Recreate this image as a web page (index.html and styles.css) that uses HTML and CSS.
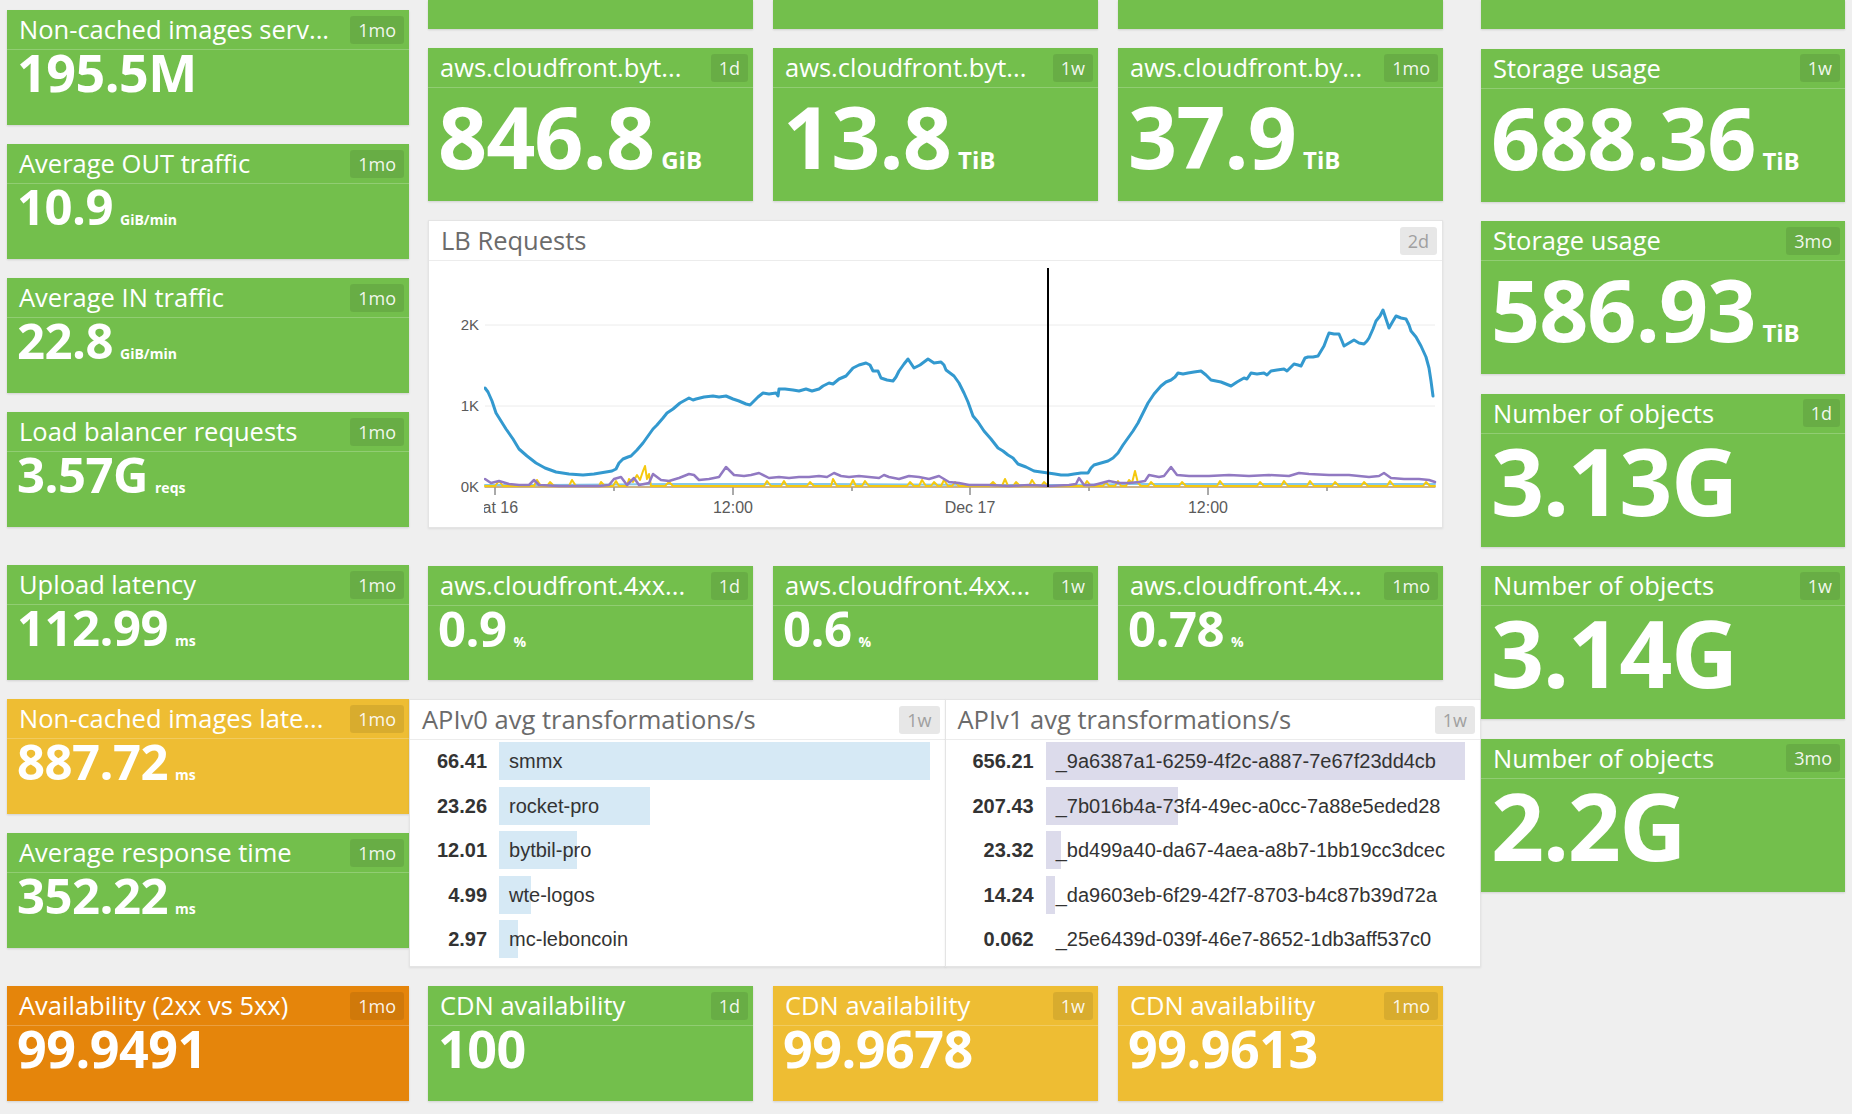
FILE: index.html
```html
<!DOCTYPE html>
<html lang="en">
<head>
<meta charset="utf-8">
<title>Dashboard</title>
<link rel="stylesheet" href="styles.css">
</head>
<body>
<div class="board">
  <div class="col col-left">
    <div class="tile green"><div class="hd"><span class="ttl">Non-cached images serv...</span><span class="badge">1mo</span></div><div class="val vm">195.5M</div></div>
    <div class="tile green"><div class="hd"><span class="ttl">Average OUT traffic</span><span class="badge">1mo</span></div><div class="val vs">10.9<span class="u">GiB/min</span></div></div>
    <div class="tile green"><div class="hd"><span class="ttl">Average IN traffic</span><span class="badge">1mo</span></div><div class="val vs">22.8<span class="u">GiB/min</span></div></div>
    <div class="tile green"><div class="hd"><span class="ttl">Load balancer requests</span><span class="badge">1mo</span></div><div class="val vs">3.57G<span class="u">reqs</span></div></div>
    <div class="tile green sep"><div class="hd"><span class="ttl">Upload latency</span><span class="badge">1mo</span></div><div class="val vs">112.99<span class="u">ms</span></div></div>
    <div class="tile yellow"><div class="hd"><span class="ttl">Non-cached images late...</span><span class="badge">1mo</span></div><div class="val vs">887.72<span class="u">ms</span></div></div>
    <div class="tile green"><div class="hd"><span class="ttl">Average response time</span><span class="badge">1mo</span></div><div class="val vs">352.22<span class="u">ms</span></div></div>
    <div class="tile orange sep"><div class="hd"><span class="ttl">Availability (2xx vs 5xx)</span><span class="badge">1mo</span></div><div class="val vm">99.9491</div></div>
  </div>

  <div class="col col-mid">
    <div class="row row-stub">
      <div class="tile green"></div>
      <div class="tile green"></div>
      <div class="tile green"></div>
    </div>
    <div class="row row-big">
      <div class="tile green"><div class="hd"><span class="ttl">aws.cloudfront.byt...</span><span class="badge">1d</span></div><div class="val vl">846.8<span class="u">GiB</span></div></div>
      <div class="tile green"><div class="hd"><span class="ttl">aws.cloudfront.byt...</span><span class="badge">1w</span></div><div class="val vl">13.8<span class="u">TiB</span></div></div>
      <div class="tile green"><div class="hd"><span class="ttl">aws.cloudfront.by...</span><span class="badge">1mo</span></div><div class="val vl">37.9<span class="u">TiB</span></div></div>
    </div>

    <div class="panel chart">
      <div class="hd"><span class="ttl">LB Requests</span><span class="badge">2d</span></div>
      <svg class="plot" width="1013" height="267" viewBox="0 0 1013 267">
        <defs><clipPath id="cp"><rect x="55" y="0" width="955" height="267"/></clipPath></defs>
        <line class="grid" x1="56" y1="64" x2="1006" y2="64"/>
        <line class="grid" x1="56" y1="145" x2="1006" y2="145"/>
        <line class="axis" x1="56" y1="226" x2="1006" y2="226"/>
        <text class="yl" x="50" y="69">2K</text>
        <text class="yl" x="50" y="150">1K</text>
        <text class="yl" x="50" y="231">0K</text>
        <line class="tick" x1="66" y1="226" x2="66" y2="234"/>
        <line class="tick" x1="304" y1="226" x2="304" y2="234"/>
        <line class="tick" x1="541" y1="226" x2="541" y2="234"/>
        <line class="tick" x1="779" y1="226" x2="779" y2="234"/>
        <line class="tick" x1="185" y1="226" x2="185" y2="230"/>
        <line class="tick" x1="423" y1="226" x2="423" y2="230"/>
        <line class="tick" x1="660" y1="226" x2="660" y2="230"/>
        <line class="tick" x1="898" y1="226" x2="898" y2="230"/>
        <g clip-path="url(#cp)">
          <text class="xl" x="66" y="252">Sat 16</text>
          <text class="xl" x="304" y="252">12:00</text>
          <text class="xl" x="541" y="252">Dec 17</text>
          <text class="xl" x="779" y="252">12:00</text>
          <polyline class="s-olive" points="56,226 1006,226"/>
          <polyline class="s-sky" points="56,224 120,224 240,223 400,223 560,224 640,224 700,223 860,223 1006,223"/>
          <polyline class="s-yel" points="56,225 66,225 70,220 74,225 105,225 108,219 112,225 118,225 121,221 125,225 140,225 143,219 147,225 170,225 172,221 176,225 184,225 187,220 190,225 198,225 200,218 204,221 208,214 211,219 214,210 216,205 218,218 220,213 222,225 236,225 240,221 244,225 300,225 335,225 338,220 342,225 352,225 355,220 358,225 378,225 381,221 385,225 402,225 404,218 408,225 421,225 424,219 427,225 433,225 436,220 440,225 478,225 481,221 485,225 490,225 493,219 497,225 502,225 505,221 509,225 512,225 515,219 519,225 523,225 526,221 530,225 560,225 564,221 568,225 573,225 576,218 579,225 584,225 587,221 591,225 600,225 603,219 607,225 612,225 615,221 619,225 655,225 658,220 662,225 674,225 677,221 680,225 686,225 689,220 692,225 697,225 700,219 703,222 706,210 709,222 712,225 719,225 722,221 726,225 750,225 753,221 757,225 788,225 791,220 795,225 828,225 831,221 835,225 852,225 855,220 859,225 878,225 881,220 885,225 903,225 906,221 910,225 932,225 935,221 939,225 958,225 961,220 965,225 994,225 997,221 1001,225 1006,225"/>
          <polyline class="s-pur" points="56,218 62,222 70,220 80,223 90,224 100,224 105,219 110,224 130,225 150,225 170,225 180,224 185,218 192,216 198,224 205,217 210,224 220,222 224,213 232,219 240,220 250,217 260,213 265,214 270,219 280,218 290,216 297,206 305,214 315,215 322,214 330,212 340,217 350,216 360,217 370,216 380,216 390,215 398,216 405,212 412,215 420,216 430,215 440,216 450,217 455,214 460,216 470,218 480,215 490,216 500,218 510,215 520,221 530,222 540,224 560,224 580,225 600,224 620,225 640,224 647,223 650,217 655,224 665,224 680,220 690,222 700,222 710,221 716,220 720,214 730,216 735,215 742,206 748,214 760,215 780,215 800,214 820,215 840,214 860,215 870,212 880,213 900,214 920,214 940,216 950,215 955,212 962,217 975,218 990,218 1000,219 1006,221"/>
          <polyline class="s-lb" points="56,127 59,131 63,140 67,152 72,160 77,168 84,178 90,188 98,195 107,202 116,207 127,211 140,213 154,214 165,213 177,211 183,210 187,208 190,202 194,198 199,196 202,195 208,189 214,182 219,175 224,168 228,164 234,157 238,152 244,148 251,142 260,137 264,139 267,138 275,136 284,135 290,136 297,135 304,138 310,140 317,143 321,144 324,141 329,136 334,132 340,133 347,132 349,135 350,128 356,128 364,129 370,130 377,128 383,130 390,128 394,125 400,122 404,123 410,118 417,115 424,107 430,104 437,102 441,104 444,110 449,110 452,117 458,119 464,120 467,116 470,110 475,103 479,98 483,104 485,107 491,104 499,98 505,102 512,101 515,104 517,109 521,112 525,115 530,122 535,132 539,141 544,155 549,161 555,170 562,178 569,187 574,190 579,194 584,197 589,203 597,206 605,210 612,211 619,212 626,213 632,214 639,214 645,213 652,212 659,212 662,207 665,204 672,202 679,200 684,197 689,192 694,184 699,177 704,170 709,162 714,152 719,142 725,133 732,125 737,121 742,119 746,116 749,112 754,113 759,112 765,111 772,110 777,114 782,119 787,120 792,121 797,123 802,125 808,121 815,117 818,118 822,112 828,113 835,112 838,114 842,110 848,109 855,108 858,110 865,103 869,104 872,105 876,97 879,96 884,96 889,95 892,90 895,85 898,77 900,72 905,73 910,73 913,80 915,85 920,82 925,79 930,82 935,83 938,80 940,77 944,68 947,60 951,55 954,49 957,58 960,67 964,60 967,55 972,57 977,58 980,64 982,70 987,76 992,85 997,96 1000,107 1002,120 1004,135"/>
        </g>
        <line class="hover" x1="619" y1="7" x2="619" y2="226"/>
      </svg>
    </div>

    <div class="row row-mid">
      <div class="tile green"><div class="hd"><span class="ttl">aws.cloudfront.4xx...</span><span class="badge">1d</span></div><div class="val vs">0.9<span class="u">%</span></div></div>
      <div class="tile green"><div class="hd"><span class="ttl">aws.cloudfront.4xx...</span><span class="badge">1w</span></div><div class="val vs">0.6<span class="u">%</span></div></div>
      <div class="tile green"><div class="hd"><span class="ttl">aws.cloudfront.4x...</span><span class="badge">1mo</span></div><div class="val vs">0.78<span class="u">%</span></div></div>
    </div>

    <div class="tables">
      <div class="panel toplist">
        <div class="hd"><span class="ttl">APIv0 avg transformations/s</span><span class="badge">1w</span></div>
        <div class="tl-body blue">
          <div class="num">66.41</div><div class="bar"><div class="fill" style="width:100%"></div><div class="lbl">smmx</div></div>
          <div class="num">23.26</div><div class="bar"><div class="fill" style="width:35%"></div><div class="lbl">rocket-pro</div></div>
          <div class="num">12.01</div><div class="bar"><div class="fill" style="width:18.1%"></div><div class="lbl">bytbil-pro</div></div>
          <div class="num">4.99</div><div class="bar"><div class="fill" style="width:7.5%"></div><div class="lbl">wte-logos</div></div>
          <div class="num">2.97</div><div class="bar"><div class="fill" style="width:4.5%"></div><div class="lbl">mc-leboncoin</div></div>
        </div>
      </div>
      <div class="panel toplist">
        <div class="hd"><span class="ttl">APIv1 avg transformations/s</span><span class="badge">1w</span></div>
        <div class="tl-body lav">
          <div class="num">656.21</div><div class="bar"><div class="fill" style="width:100%"></div><div class="lbl">_9a6387a1-6259-4f2c-a887-7e67f23dd4cb</div></div>
          <div class="num">207.43</div><div class="bar"><div class="fill" style="width:31.6%"></div><div class="lbl">_7b016b4a-73f4-49ec-a0cc-7a88e5eded28</div></div>
          <div class="num">23.32</div><div class="bar"><div class="fill" style="width:3.55%"></div><div class="lbl">_bd499a40-da67-4aea-a8b7-1bb19cc3dcec</div></div>
          <div class="num">14.24</div><div class="bar"><div class="fill" style="width:2.17%"></div><div class="lbl">_da9603eb-6f29-42f7-8703-b4c87b39d72a</div></div>
          <div class="num">0.062</div><div class="bar"><div class="fill" style="width:0%"></div><div class="lbl">_25e6439d-039f-46e7-8652-1db3aff537c0</div></div>
        </div>
      </div>
    </div>

    <div class="row row-cdn">
      <div class="tile green"><div class="hd"><span class="ttl">CDN availability</span><span class="badge">1d</span></div><div class="val vm">100</div></div>
      <div class="tile yellow"><div class="hd"><span class="ttl">CDN availability</span><span class="badge">1w</span></div><div class="val vm">99.9678</div></div>
      <div class="tile yellow"><div class="hd"><span class="ttl">CDN availability</span><span class="badge">1mo</span></div><div class="val vm">99.9613</div></div>
    </div>
  </div>

  <div class="col col-right">
    <div class="tile green stub"></div>
    <div class="tile green tall"><div class="hd"><span class="ttl">Storage usage</span><span class="badge">1w</span></div><div class="val vl">688.36<span class="u">TiB</span></div></div>
    <div class="tile green tall"><div class="hd"><span class="ttl">Storage usage</span><span class="badge">3mo</span></div><div class="val vl">586.93<span class="u">TiB</span></div></div>
    <div class="tile green tall"><div class="hd"><span class="ttl">Number of objects</span><span class="badge">1d</span></div><div class="val vx">3.13G</div></div>
    <div class="tile green tall"><div class="hd"><span class="ttl">Number of objects</span><span class="badge">1w</span></div><div class="val vx">3.14G</div></div>
    <div class="tile green tall"><div class="hd"><span class="ttl">Number of objects</span><span class="badge">3mo</span></div><div class="val vx">2.2G</div></div>
  </div>
</div>
</body>
</html>
```

FILE: styles.css
```css
html, body {
  margin: 0;
  height: 100%;
  overflow: hidden;
}
body {
  background: #efefef;
  font-family: "Open Sans", sans-serif;
}
.board {
  display: flex;
  padding-left: 7px;
}
.col {
  display: flex;
  flex-direction: column;
  flex: none;
}
.col-left {
  width: 402px;
  padding-top: 10px;
  gap: 19px;
}
.col-left .tile { height: 115px; }
.col-left .sep { margin-top: 19px; }

.col-mid {
  width: 1072px;
  gap: 19px;
}
.row {
  display: flex;
  gap: 20px;
  padding-left: 19px;
}
.row .tile { flex: 0 0 325px; }
.row-stub { height: 29px; }
.row-big { height: 153px; }
.row-mid { height: 114px; margin-top: 19px; }
.row-cdn { height: 115px; }

.col-right {
  width: 364px;
  gap: 19.5px;
}
.col-right .stub { height: 29px; }
.col-right .tall { height: 153px; }

/* tiles */
.tile {
  box-sizing: border-box;
  color: #fff;
  box-shadow: 0 1px 2px rgba(0, 0, 0, 0.13);
  overflow: hidden;
}
.green { background: #73bf4c; }
.yellow { background: #eebd33; }
.orange { background: #e5850b; }

.hd {
  height: 39px;
  border-bottom: 1px solid rgba(255, 255, 255, 0.22);
  display: flex;
  align-items: center;
  justify-content: space-between;
  padding: 0 5px 0 12px;
}
.ttl {
  font-size: 25.5px;
  line-height: 39px;
  white-space: nowrap;
}
.badge {
  font-size: 18px;
  line-height: 28px;
  height: 28px;
  padding: 0 8px;
  border-radius: 3px;
  background: rgba(0, 0, 0, 0.09);
  color: rgba(255, 255, 255, 0.92);
}

.val {
  font-weight: 700;
  padding-left: 10px;
  white-space: nowrap;
  letter-spacing: -0.5px;
}
.val .u { margin-left: 7px; letter-spacing: 0; }
.vs { font-size: 49px; line-height: 44px; }
.vs .u { font-size: 14px; }
.vm { font-size: 52px; line-height: 44.5px; }
.vl { font-size: 86px; line-height: 95px; letter-spacing: -1px; }
.vl .u { font-size: 24px; }
.vx { font-size: 93px; line-height: 93px; letter-spacing: -1.5px; }

/* white panels */
.panel {
  background: #fff;
  box-sizing: border-box;
  border: 1px solid #e4e4e4;
  box-shadow: 0 1px 2px rgba(0, 0, 0, 0.08);
}
.panel .hd {
  border-bottom: 1px solid #ececec;
  padding: 0 5px 0 12px;
}
.panel .ttl { color: #6b6b6b; }
.panel .badge {
  background: #e7e7e7;
  color: #a0a0a0;
}

.chart {
  margin-left: 19px;
  width: 1015px;
  height: 308px;
}
.plot { display: block; }
.plot .grid { stroke: #ececec; stroke-width: 1; }
.plot .axis { stroke: #bbb; stroke-width: 1; }
.plot .tick { stroke: #555; stroke-width: 1; }
.plot .yl {
  font: 15px "Liberation Sans", Arial, sans-serif;
  fill: #5a5a5a;
  text-anchor: end;
}
.plot .xl {
  font: 16px "Liberation Sans", Arial, sans-serif;
  fill: #5a5a5a;
  text-anchor: middle;
}
.plot polyline { fill: none; stroke-linejoin: round; stroke-linecap: round; }
.s-lb { stroke: #3399cf; stroke-width: 3; }
.s-pur { stroke: #9179c2; stroke-width: 2.5; }
.s-yel { stroke: #f5c90f; stroke-width: 2; }
.s-sky { stroke: #86c8ea; stroke-width: 2; }
.s-olive { stroke: #c7a46a; stroke-width: 1.5; }
.plot .hover { stroke: #000; stroke-width: 2; }

.tables {
  display: flex;
  height: 268px;
}
.toplist { flex: 1; }
.toplist + .toplist { margin-left: -1px; }
.tl-body {
  display: grid;
  grid-template-columns: auto 1fr;
  column-gap: 12px;
  row-gap: 6.5px;
  padding: 2px 15px 0 27px;
}
.num {
  font: 700 20px/38px "Liberation Sans", Arial, sans-serif;
  color: #333;
  text-align: right;
}
.bar {
  display: grid;
  height: 38px;
}
.bar .fill, .bar .lbl { grid-area: 1 / 1; }
.blue .fill { background: #d6e9f5; }
.lav .fill { background: #dcdbeb; }
.lbl {
  font: 20px/38px "Liberation Sans", Arial, sans-serif;
  color: #333;
  padding-left: 10px;
  white-space: nowrap;
}
```
